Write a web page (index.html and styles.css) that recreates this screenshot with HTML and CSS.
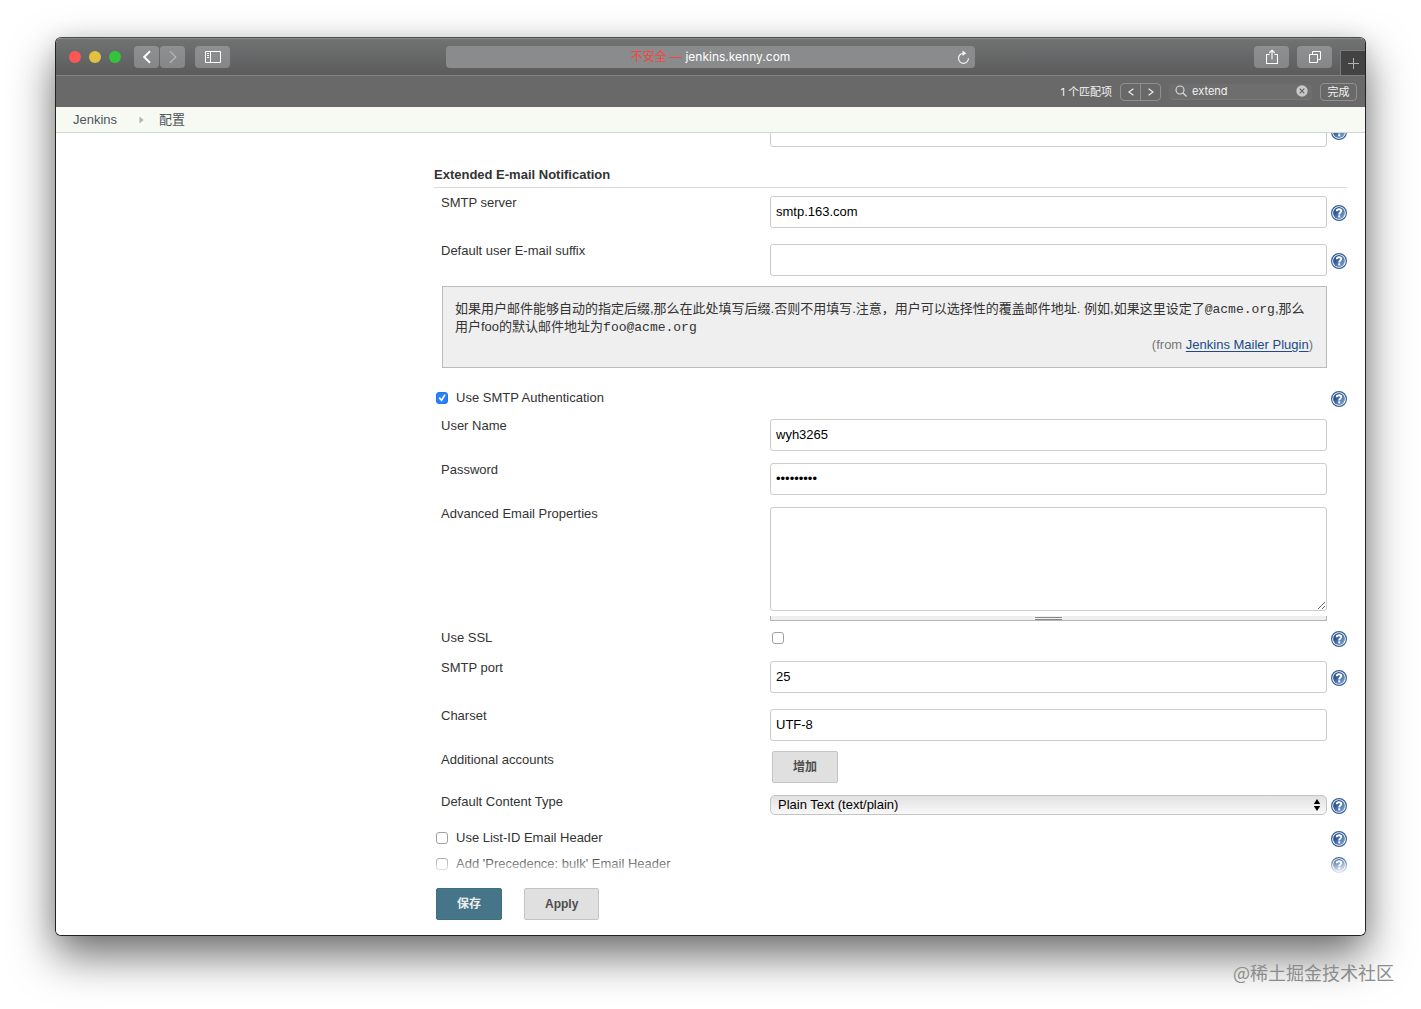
FILE: index.html
```html
<!DOCTYPE html>
<html lang="zh-CN">
<head>
<meta charset="utf-8">
<title>配置 [Jenkins]</title>
<meta name="viewport" content="width=device-width, initial-scale=1">
<link rel="stylesheet" href="styles.css">
</head>
<body>
<svg class="defs" aria-hidden="true">
  <defs>
    <linearGradient id="help-fill" x1="0" y1="0" x2="1" y2="1">
      <stop offset="0.3" stop-color="#2a5591"/>
      <stop offset="1" stop-color="#8fb0d6"/>
    </linearGradient>
    <symbol id="help" viewBox="0 0 16 16">
      <circle cx="8" cy="8" r="7.4" fill="#fff" stroke="#37609a" stroke-width="1.2"/>
      <circle cx="8" cy="8" r="5.9" fill="url(#help-fill)"/>
      <path d="M5.7 6.2C5.8 4.700 6.800 4.200 8 4.200s2.300.7 2.300 1.900C10.300 7.500 8.200 7.600 8.200 9.400" fill="none" stroke="#fff" stroke-width="1.900"/>
      <rect x="7.200" y="10.300" width="2" height="2" fill="#fff"/>
    </symbol>
  </defs>
</svg>

<div class="window">
  <header class="titlebar">
    <div class="titlebar-left">
      <span class="light light-close"></span>
      <span class="light light-min"></span>
      <span class="light light-max"></span>
      <div class="history">
        <button class="tool tool-nav" type="button" aria-label="后退"><svg width="10" height="14" viewBox="0 0 10 14"><path d="M8 1.300 2.200 7 8 12.700" fill="none" stroke="#fff" stroke-width="2"/></svg></button>
        <button class="tool tool-nav" type="button" aria-label="前进"><svg width="10" height="14" viewBox="0 0 10 14"><path d="M2 1.300 7.800 7 2 12.700" fill="none" stroke="#b4b5b6" stroke-width="1.300"/></svg></button>
      </div>
      <button class="tool" type="button" aria-label="边栏"><svg width="16" height="12" viewBox="0 0 16 12"><path d="M.5.5h15v11H.5zM5.500.5v11M2 2.500h2M2 4.500h2M2 6.500h2" fill="none" stroke="#fff"/></svg></button>
    </div>
    <div class="address">
      <span><span class="insecure">不安全 —</span> jenkins.kenny.com</span>
      <button class="reload" type="button" aria-label="重新载入"><svg width="13" height="15" viewBox="0 0 13 15"><path d="M6.500 3.300a5 5 0 1 0 5 5" fill="none" stroke="#f2f2f2" stroke-width="1.200"/><path d="M5.500.6 9.300 3.300 5.500 6z" fill="#f2f2f2"/></svg></button>
    </div>
    <div class="titlebar-right">
      <button class="tool" type="button" aria-label="共享"><svg width="12" height="16" viewBox="0 0 12 16"><path d="M3.500 5.500h-3v9h11v-9h-3M6 10.500V1.500M3.300 4 6 1.200 8.700 4" fill="none" stroke="#fff" stroke-width="1.100"/></svg></button>
      <button class="tool" type="button" aria-label="标签页"><svg width="12" height="12" viewBox="0 0 12 12"><path d="M.5 3.500h8v8h-8zM3.500 3.500v-3h8v8h-3" fill="none" stroke="#fff"/></svg></button>
      <button class="new-tab" type="button" aria-label="新标签页"><svg width="11" height="11" viewBox="0 0 11 11"><path d="M5.500 0v11M0 5.500h11" stroke="#b0b0b0"/></svg></button>
    </div>
  </header>

  <div class="findbar">
    <span>1 个匹配项</span>
    <div class="find-nav">
      <button type="button" aria-label="上一个"><svg width="6" height="8" viewBox="0 0 6 8"><path d="M5.400.8.9 4l4.500 3.200" fill="none" stroke="#eee" stroke-width="1.200"/></svg></button>
      <button type="button" aria-label="下一个"><svg width="6" height="8" viewBox="0 0 6 8"><path d="M.6.8 5.100 4 .6 7.200" fill="none" stroke="#eee" stroke-width="1.200"/></svg></button>
    </div>
    <div class="find-box">
      <svg width="12" height="12" viewBox="0 0 12 12"><circle cx="5" cy="5" r="4" fill="none" stroke="#ddd" stroke-width="1.100"/><path d="m8 8 3.500 3.500" stroke="#ddd" stroke-width="1.300"/></svg>
      <input type="text" value="extend" aria-label="查找">
      <button type="button" aria-label="清除"><svg width="12" height="12" viewBox="0 0 12 12"><circle cx="6" cy="6" r="5.700" fill="#c9c9c9"/><path d="m3.700 3.700 4.600 4.600M8.300 3.700 3.700 8.300" stroke="#666" stroke-width="1.200"/></svg></button>
    </div>
    <button class="find-done" type="button">完成</button>
  </div>

  <nav class="breadcrumbs">
    <a href="#">Jenkins</a>
    <svg width="5" height="8" viewBox="0 0 5 8"><path d="M.5.500 4.500 4 .5 7.500z" fill="#adb3ad"/></svg>
    <a href="#">配置</a>
  </nav>

  <form class="config">
    <div class="fields">
      <div class="row row-cut has-help">
        <div class="control"><input class="text" type="text" aria-label="上一项"></div>
        <a class="help help-input" href="#" aria-label="帮助"><svg><use href="#help"/></svg></a>
      </div>

      <h2>Extended E-mail Notification</h2>

      <div class="row has-help">
        <label for="server">SMTP server</label>
        <div class="control"><input class="text" id="server" type="text" value="smtp.163.com"></div>
        <a class="help help-input" href="#" aria-label="帮助"><svg><use href="#help"/></svg></a>
      </div>
      <div class="row">
        <label for="suffix">Default user E-mail suffix</label>
        <div class="control"><input class="text" id="suffix" type="text"></div>
        <a class="help help-input" href="#" aria-label="帮助"><svg><use href="#help"/></svg></a>
      </div>

      <div class="help-text">
        <p>如果用户邮件能够自动的指定后缀,那么在此处填写后缀.否则不用填写.注意，用户可以选择性的覆盖邮件地址. 例如,如果这里设定了<code>@acme.org</code>,那么用户foo的默认邮件地址为<code>foo@acme.org</code></p>
        <p class="from">(from <a href="#">Jenkins Mailer Plugin</a>)</p>
      </div>

      <div class="check-row">
        <input type="checkbox" id="auth" checked>
        <label for="auth">Use SMTP Authentication</label>
        <a class="help" href="#" aria-label="帮助"><svg><use href="#help"/></svg></a>
      </div>
      <div class="row">
        <label for="user">User Name</label>
        <div class="control"><input class="text" id="user" type="text" value="wyh3265"></div>
      </div>
      <div class="row">
        <label for="password">Password</label>
        <div class="control"><input class="text" id="password" type="password" value="123456789"></div>
      </div>
      <div class="row row-area">
        <label for="props">Advanced Email Properties</label>
        <div class="control">
          <textarea id="props"></textarea>
          <div class="grip"><span></span></div>
        </div>
      </div>
      <div class="row row-ssl">
        <label for="ssl">Use SSL</label>
        <div class="control"><input type="checkbox" id="ssl"></div>
        <a class="help" href="#" aria-label="帮助"><svg><use href="#help"/></svg></a>
      </div>
      <div class="row has-help">
        <label for="port">SMTP port</label>
        <div class="control"><input class="text" id="port" type="text" value="25"></div>
        <a class="help help-input" href="#" aria-label="帮助"><svg><use href="#help"/></svg></a>
      </div>
      <div class="row">
        <label for="charset">Charset</label>
        <div class="control"><input class="text" id="charset" type="text" value="UTF-8"></div>
      </div>
      <div class="row">
        <span class="name">Additional accounts</span>
        <div class="control control-button"><button class="btn" type="button">增加</button></div>
      </div>
      <div class="row has-help">
        <label for="type">Default Content Type</label>
        <div class="control control-select">
          <select id="type"><option>Plain Text (text/plain)</option><option>HTML (text/html)</option></select>
          <svg class="arrows" width="8" height="12" viewBox="0 0 8 12"><path d="M4 0l3.200 5H.8zM4 12 .8 7h6.400z"/></svg>
        </div>
        <a class="help help-select" href="#" aria-label="帮助"><svg><use href="#help"/></svg></a>
      </div>
      <div class="check-row">
        <input type="checkbox" id="listid">
        <label for="listid">Use List-ID Email Header</label>
        <a class="help" href="#" aria-label="帮助"><svg><use href="#help"/></svg></a>
      </div>
      <div class="check-row">
        <input type="checkbox" id="bulk">
        <label for="bulk">Add 'Precedence: bulk' Email Header</label>
        <a class="help" href="#" aria-label="帮助"><svg><use href="#help"/></svg></a>
      </div>
    </div>
    <div class="save-bar">
      <button class="btn btn-primary" type="submit">保存</button>
      <button class="btn" type="button">Apply</button>
    </div>
  </form>
</div>
<p class="credit">@稀土掘金技术社区</p>
</body>
</html>
```

FILE: styles.css
```css
* {
  box-sizing: border-box;
}

body {
  margin: 0;
  min-height: 100vh;
  padding: 37px 55px 24px;
  background: #fff;
  color: #333;
  font: 13px/18px "Liberation Sans", "Noto Sans CJK SC", sans-serif;
}

button,
input,
select,
textarea {
  margin: 0;
  font: inherit;
}

button {
  padding: 0;
  border: 0;
  background: none;
  color: inherit;
}

svg {
  display: block;
  flex: none;
}

p {
  margin: 0;
}

.defs {
  position: absolute;
  width: 0;
  height: 0;
}

.window {
  border: 1px solid #222;
  border-top-color: #4b4d4e;
  border-radius: 6px;
  background: #fff;
  overflow: hidden;
  box-shadow: 0 20px 44px rgba(0, 0, 0, 0.56), 0 0 20px rgba(0, 0, 0, 0.08);
}

/* Browser toolbar */
.titlebar {
  display: grid;
  grid-template-columns: 1fr minmax(0, 529px) 1fr;
  align-items: center;
  height: 38px;
  border-top: 1px solid #858788;
  border-bottom: 1px solid #808080;
  background: linear-gradient(#717373, #5b5b5c);
  color: #fff;
  font: 12px/18px Inter, "Noto Sans CJK SC", sans-serif;
}

.titlebar-left,
.titlebar-right {
  display: flex;
  align-items: center;
  gap: 8px;
  height: 36px;
}

.titlebar-left {
  padding-left: 13px;
}

.titlebar-right {
  justify-content: flex-end;
}

.light {
  width: 12px;
  height: 12px;
  border-radius: 50%;
}

.light-close {
  background: #fc5753;
}

.light-min {
  background: #e2c140;
}

.light-max {
  background: #35c33c;
}

.history {
  display: flex;
  gap: 1px;
  padding: 0 2px 0 5px;
}

.tool {
  display: flex;
  align-items: center;
  justify-content: center;
  width: 35px;
  height: 22px;
  border-radius: 4px;
  background: linear-gradient(#8f9091, #858687);
}

.tool-nav {
  width: 25px;
}

.new-tab {
  display: flex;
  align-items: center;
  justify-content: center;
  align-self: flex-end;
  width: 25px;
  height: 25px;
  border: 1px solid #7b7b7c;
  border-width: 1px 0 0 1px;
  background: #434344;
}

.address {
  display: flex;
  align-items: center;
  justify-content: center;
  position: relative;
  height: 22px;
  border-radius: 4px;
  background: #8a8b8c;
}

.insecure {
  color: #f6453d;
}

.reload {
  position: absolute;
  right: 5px;
}

.findbar {
  display: flex;
  align-items: center;
  justify-content: flex-end;
  gap: 8px;
  height: 31px;
  padding-right: 8px;
  background: #696969;
  color: #f2f2f2;
  font: 11px/16px Inter, "Noto Sans CJK SC", sans-serif;
}

.find-nav {
  display: flex;
  border: 1px solid #909090;
  border-radius: 4px;
}

.find-nav button {
  display: flex;
  align-items: center;
  justify-content: center;
  width: 19px;
  height: 16px;
}

.find-nav button + button {
  width: 20px;
  border-left: 1px solid #909090;
}

.find-box {
  display: flex;
  align-items: center;
  gap: 5px;
  width: 143px;
  height: 16px;
  padding: 0 4px 0 6px;
  border-bottom: 1px solid #777;
  border-radius: 4px;
  background: #6e6e6e;
}

.find-box input {
  flex: 1;
  min-width: 0;
  padding: 0;
  border: 0;
  background: none;
  color: #f2f2f2;
}

.find-done {
  width: 37px;
  height: 18px;
  border: 1px solid #909090;
  border-radius: 4px;
}

/* Jenkins page */
.breadcrumbs {
  display: flex;
  align-items: center;
  height: 26px;
  padding-left: 17px;
  border-bottom: 1px solid #d0d6d0;
  background: #f6faf2;
}

.breadcrumbs a {
  color: #4d545d;
  text-decoration: none;
}

.breadcrumbs svg {
  margin: 0 15px 0 22px;
}

.fields {
  padding: 0 18px 3px 378px;
  overflow: hidden;
}

h2 {
  margin: 0 0 6px;
  padding-bottom: 3px;
  border-bottom: 1px solid #d9d9d9;
  font-size: 13px;
  line-height: 18px;
}

.row {
  display: grid;
  grid-template-columns: minmax(0, 336fr) minmax(0, 557fr) 20px;
  align-items: start;
  margin-bottom: 10px;
}

.row.has-help {
  margin-bottom: 14px;
}

.row-cut.has-help {
  margin: -20px 0 19px;
}

.row > label,
.name {
  padding-left: 7px;
}

.control {
  grid-column: 2;
  padding-top: 2px;
}

.text,
textarea {
  display: block;
  width: 100%;
  border: 1px solid #ccc;
  border-radius: 3px;
  background: #fff;
  color: #000;
}

.text {
  height: 32px;
  padding: 0 5px 2px;
}

textarea {
  height: 104px;
  padding: 6px;
}

.help {
  margin-left: auto;
  padding-top: 2px;
}

.help svg {
  width: 16px;
  height: 16px;
}

.help-input {
  padding-top: 11px;
}

.help-select {
  padding-top: 5px;
}

.help-text {
  margin: 0 20px 21px 8px;
  padding: 13px 13px 13px 12px;
  border: 1px solid #bbb;
  background: #efefef;
}

code {
  font: 13px/16px "Liberation Mono", monospace;
}

.from {
  color: #777;
  text-align: right;
}

.from a {
  color: #204a87;
  text-underline-offset: 2px;
}

input[type="checkbox"] {
  appearance: none;
  display: grid;
  place-items: center;
  flex: none;
  width: 12px;
  height: 12px;
  border: 1px solid #a0a0a0;
  border-radius: 3px;
  background: #fff;
}

input[type="checkbox"]:checked {
  border-color: #1d78f2;
  background: #2a82f7;
}

input[type="checkbox"]:checked::after {
  content: "";
  width: 8px;
  height: 8px;
  background: #fff;
  clip-path: polygon(8% 52%, 24% 38%, 42% 62%, 78% 2%, 96% 14%, 46% 96%);
}

.check-row {
  display: flex;
  align-items: center;
  gap: 8px;
  height: 18px;
  margin-bottom: 10px;
  padding-left: 2px;
}

.check-row + .check-row {
  margin: -2px 0 0;
}

.grip {
  display: flex;
  justify-content: center;
  align-items: flex-end;
  height: 5px;
  margin-top: 5px;
  border: 1px solid #b5b5b5;
  border-top: 0;
  background: #efefef;
}

.grip span {
  width: 27px;
  height: 3px;
  border: 1px solid #888;
  border-width: 1px 0;
}

.row.row-area {
  margin-bottom: 8px;
}

.row.row-ssl {
  margin-bottom: 12px;
}

.row-ssl .control {
  padding: 3px 2px;
}

.control-button {
  padding: 0 2px;
}

.control-select {
  position: relative;
}

select {
  appearance: none;
  display: block;
  width: 100%;
  height: 20px;
  padding: 0 7px;
  border: 1px solid #c4c4c4;
  border-radius: 5px;
  background: linear-gradient(#e2e2e2, #f8f8f8);
  color: #000;
  line-height: 16px;
}

.arrows {
  position: absolute;
  right: 6px;
  top: 6px;
  pointer-events: none;
}

.btn {
  height: 32px;
  padding: 0 20px;
  border: 1px solid #c4c4c4;
  border-radius: 2px;
  background: #e0e0e0;
  color: #4d4d4d;
  font-size: 12px;
  font-weight: bold;
}

.btn-primary {
  border-color: #3f6e80;
  background: #467488;
  color: #eee;
}

.save-bar {
  display: flex;
  gap: 22px;
  position: relative;
  padding: 12px 18px 15px 380px;
  background: #fff;
}

.save-bar::before {
  content: "";
  position: absolute;
  left: 0;
  right: 0;
  bottom: 100%;
  height: 20px;
  background: linear-gradient(rgba(255, 255, 255, 0), #fff);
}

.credit {
  margin: 24px -28px 0 0;
  position: relative;
  color: #8c8c8c;
  font-family: "Noto Sans CJK SC", sans-serif;
  font-size: 18px;
  line-height: 24px;
  text-align: right;
}
```
